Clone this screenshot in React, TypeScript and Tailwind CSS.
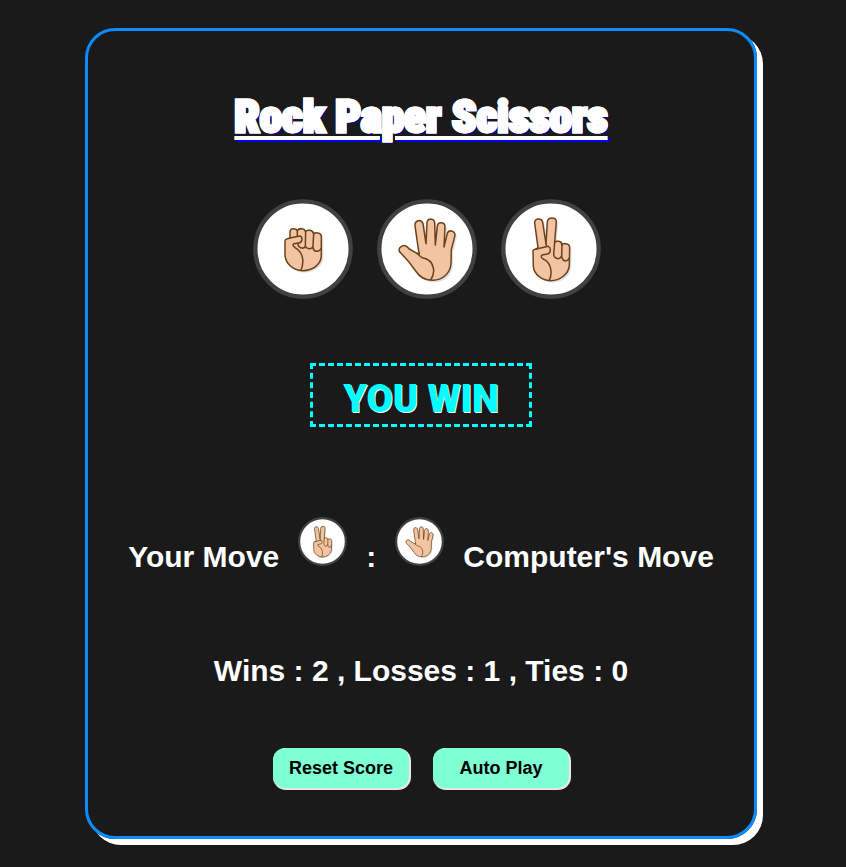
import type { ReactNode } from "react";

type Move = "rock" | "paper" | "scissors";

const SKIN = "#f2c4a2";
const LINE = "#6b4318";

const hands: Record<Move, ReactNode> = {
  rock: (
    <>
      <path d="M112 142Q113 136 119 135L127 133L127 114Q128 104 138 105Q146 105 149 111Q153 104 163 105Q171 106 174 114Q178 108 187 110Q196 111 198 121Q202 116 211 118Q220 119 221 128L221 185C221 212 196 231 165 231C134 230 115 210 112 186Z" />
      <path fill="none" d="M127 133L156 127Q163 128 163 136Q163 146 154 148L139 150Q134 153 138 158Q142 163 150 167C166 180 170 206 160 230" />
      <path fill="none" d="M149 111L149 128M174 114L173 158Q169 166 159 162Q153 160 151 154L151 148M198 121L196 158Q193 166 184 165Q175 164 173 158M196 158L196 163Q199 173 208 173Q217 173 221 163" />
    </>
  ),
  paper: (
    <>
      <path d="M136 179L143 181L139 160L130 96Q129 84 139 81Q150 79 154 90L163 150L166 87Q167 76 178 76Q188 77 189 88L191 154L197 98Q198 87 208 87Q219 87 220 98L217 160L227 119Q230 110 240 112Q250 115 250 125L239 168L238 211C235 241 212 259 184 260C157 260 142 248 132 232C121 216 107 197 86 177Q80 171 84 163Q91 154 101 156Q108 160 113 166Z" />
      <path fill="none" d="M136 179C142 185 146 190 152 192C171 195 182 206 185 223C188 237 183 250 177 259" />
    </>
  ),
  scissors: (
    <>
      <path d="M112 171Q113 167 120 167L127 162L117 88Q117 77 127 76Q139 75 141 86L151 151L155 84Q157 73 169 73Q181 73 182 84L177 146Q181 141 190 143Q198 144 199 154Q203 148 211 150Q221 151 222 160L221 215C219 241 194 261 164 261C138 260 115 242 113 219Z" />
      <path fill="none" d="M119 167L158 158Q165 161 164 171Q163 180 155 181L139 184Q135 187 138 192Q142 196 150 200C166 212 171 238 161 260" />
      <path fill="none" d="M177 146L174 182Q176 194 187 195Q196 194 198 186L199 154M198 186Q199 201 209 202Q218 201 221 193M151 151L153 158" />
    </>
  ),
};

function Hand({ move, className }: { move: Move; className: string }) {
  return (
    <svg viewBox="16 16 300 300" className={className} role="img" aria-label={move}>
      <circle cx="166" cy="166" r="143" fill="#fff" stroke="#414144" strokeWidth="13" />
      <g fill="#d0d0d0" opacity="0.6" transform="translate(6 6)">
        {hands[move]}
      </g>
      <g fill={SKIN} stroke={LINE} strokeWidth="4.5" strokeLinejoin="round" strokeLinecap="round">
        {hands[move]}
      </g>
    </svg>
  );
}

const moves: Move[] = ["rock", "paper", "scissors"];
const actions = ["Reset Score", "Auto Play"];

export default function App() {
  return (
    <div className="flex min-h-screen items-start justify-center bg-[#1a1a1a] pt-7 pr-1 pb-6 font-['Liberation_Sans',Arial,sans-serif] font-bold text-white">
      <main className="flex flex-col items-center rounded-[30px] border-3 border-[#0a8cff] px-10 pt-14 pb-12 shadow-[6px_6px_0_#fff]">
        <h1 className="font-[Impact,'Roboto_Condensed',Roboto,sans-serif] text-[45px] leading-[60px] font-black whitespace-nowrap underline decoration-4 underline-offset-4 [-webkit-text-stroke:3px_white] [text-shadow:2px_2px_0_blue]">
          Rock Paper Scissors
        </h1>

        <div className="mt-13 ml-3 flex gap-6">
          {moves.map((move) => (
            <button key={move} type="button" className="rounded-full" aria-label={`Play ${move}`}>
              <Hand move={move} className="block size-[100px]" />
            </button>
          ))}
        </div>

        <p className="mt-16 border-3 border-dashed border-[cyan] px-[30px] pt-3 pb-1 font-[Roboto,sans-serif] text-[38px] leading-[42px] font-black text-[cyan] [text-shadow:1px_1px_0_white]">
          YOU WIN
        </p>

        <div className="mt-22 flex items-start gap-[19px] text-[30px] leading-[36px] whitespace-nowrap">
          <span className="mt-6">Your Move</span>
          <Hand move="scissors" className="mt-[2px] size-[49px]" />
          <span className="mt-6">:</span>
          <Hand move="paper" className="mt-[2px] size-[49px]" />
          <span className="mt-6">Computer's Move</span>
        </div>

        <p className="mt-[78px] text-[30px] leading-[36px] whitespace-nowrap">Wins : 2 , Losses : 1 , Ties : 0</p>

        <div className="mt-[59px] flex gap-6">
          {actions.map((label) => (
            <button
              key={label}
              type="button"
              className="h-10 w-34 rounded-xl bg-[#7fffd4] text-[18px] font-bold text-black shadow-[1px_1px_0_1px_#e8e8e8]"
            >
              {label}
            </button>
          ))}
        </div>
      </main>
    </div>
  );
}
